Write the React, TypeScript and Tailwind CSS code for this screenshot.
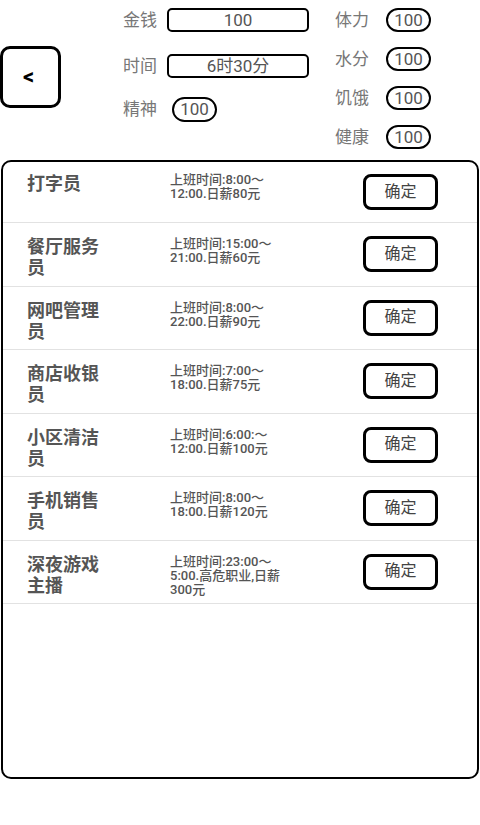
import React from 'react';

const font = { fontFamily: 'Roboto, "Noto Sans CJK SC", "Noto Sans", sans-serif' };

const jobs = [
    { name: '打字员', lines: ['上班时间:8:00～', '12:00.日薪80元'] },
    { name: '餐厅服务员', lines: ['上班时间:15:00～', '21:00.日薪60元'] },
    { name: '网吧管理员', lines: ['上班时间:8:00～', '22:00.日薪90元'] },
    { name: '商店收银员', lines: ['上班时间:7:00～', '18:00.日薪75元'] },
    { name: '小区清洁员', lines: ['上班时间:6:00:～', '12:00.日薪100元'] },
    { name: '手机销售员', lines: ['上班时间:8:00～', '18:00.日薪120元'] },
    { name: '深夜游戏主播', lines: ['上班时间:23:00～', '5:00.高危职业,日薪', '300元'] },
];

const StatPill: React.FC<{ label: string; value: string }> = ({ label, value }) => (
    <div className="flex items-center h-[24px]">
        <span className="text-[17px] text-[#777] leading-none w-[35px]">{label}</span>
        <span className="ml-[16px] w-[45px] h-[24px] border-2 border-black rounded-full flex items-center justify-center text-[17px] text-[#555] leading-none">
            {value}
        </span>
    </div>
);

const App: React.FC = () => {
    return (
        <div className="w-[480px] h-[825px] bg-white relative overflow-hidden" style={font}>
            {/* header */}
            <div className="flex h-[160px]">
                <button className="mt-[46px] w-[61px] h-[62px] border-[3px] border-black rounded-[10px] flex items-center justify-center text-[22px] font-bold text-black pr-[4px] pb-[2px]">
                    &lt;
                </button>

                <div className="ml-[62px] pt-[8px] flex flex-col">
                    <div className="flex items-center h-[24px]">
                        <span className="text-[17px] text-[#777] leading-none w-[35px]">金钱</span>
                        <span className="ml-[9px] w-[142px] h-[24px] border-2 border-black rounded-[5px] flex items-center justify-center text-[17px] text-[#555] leading-none">100</span>
                    </div>
                    <div className="flex items-center h-[24px] mt-[22px]">
                        <span className="text-[17px] text-[#777] leading-none w-[35px]">时间</span>
                        <span className="ml-[9px] w-[142px] h-[24px] border-2 border-black rounded-[5px] flex items-center justify-center text-[17px] text-[#555] leading-none">6时30分</span>
                    </div>
                    <div className="flex items-center h-[25px] mt-[19px]">
                        <span className="text-[17px] text-[#777] leading-none w-[35px]">精神</span>
                        <span className="ml-[14px] w-[45px] h-[25px] border-2 border-black rounded-full flex items-center justify-center text-[17px] text-[#555] leading-none">100</span>
                    </div>
                </div>

                <div className="ml-[26px] pt-[8px] flex flex-col gap-[15px]">
                    <StatPill label="体力" value="100" />
                    <StatPill label="水分" value="100" />
                    <StatPill label="饥饿" value="100" />
                    <StatPill label="健康" value="100" />
                </div>
            </div>

            {/* job list */}
            <div className="ml-[1px] w-[478px] h-[619px] border-2 border-black rounded-[10px] overflow-hidden">
                {jobs.map((j, i) => (
                    <div
                        key={j.name}
                        className={`flex items-center pl-[24px] border-b border-[#e2e2e2] ${i === 0 ? 'h-[61px]' : 'h-[63.5px]'}`}
                    >
                        <div className={`self-start w-[80px] text-[18px] leading-[21px] font-bold text-[#555] ${i === 0 ? 'mt-[11px]' : 'mt-[13px]'}`}>
                            {j.name}
                        </div>
                        <div className={`self-start ml-[63px] w-[120px] text-[13px] leading-[14px] font-medium text-[#555] whitespace-nowrap ${i === 0 ? 'mt-[11px]' : 'mt-[14px]'}`}>
                            {j.lines.map(l => (
                                <div key={l}>{l}</div>
                            ))}
                        </div>
                        <button className="ml-[73px] w-[75px] h-[36px] border-[3px] border-black rounded-[8px] flex items-center justify-center text-[16px] text-[#444] leading-none pb-[1px]">
                            确定
                        </button>
                    </div>
                ))}
            </div>
        </div>
    );
};

export default App;
